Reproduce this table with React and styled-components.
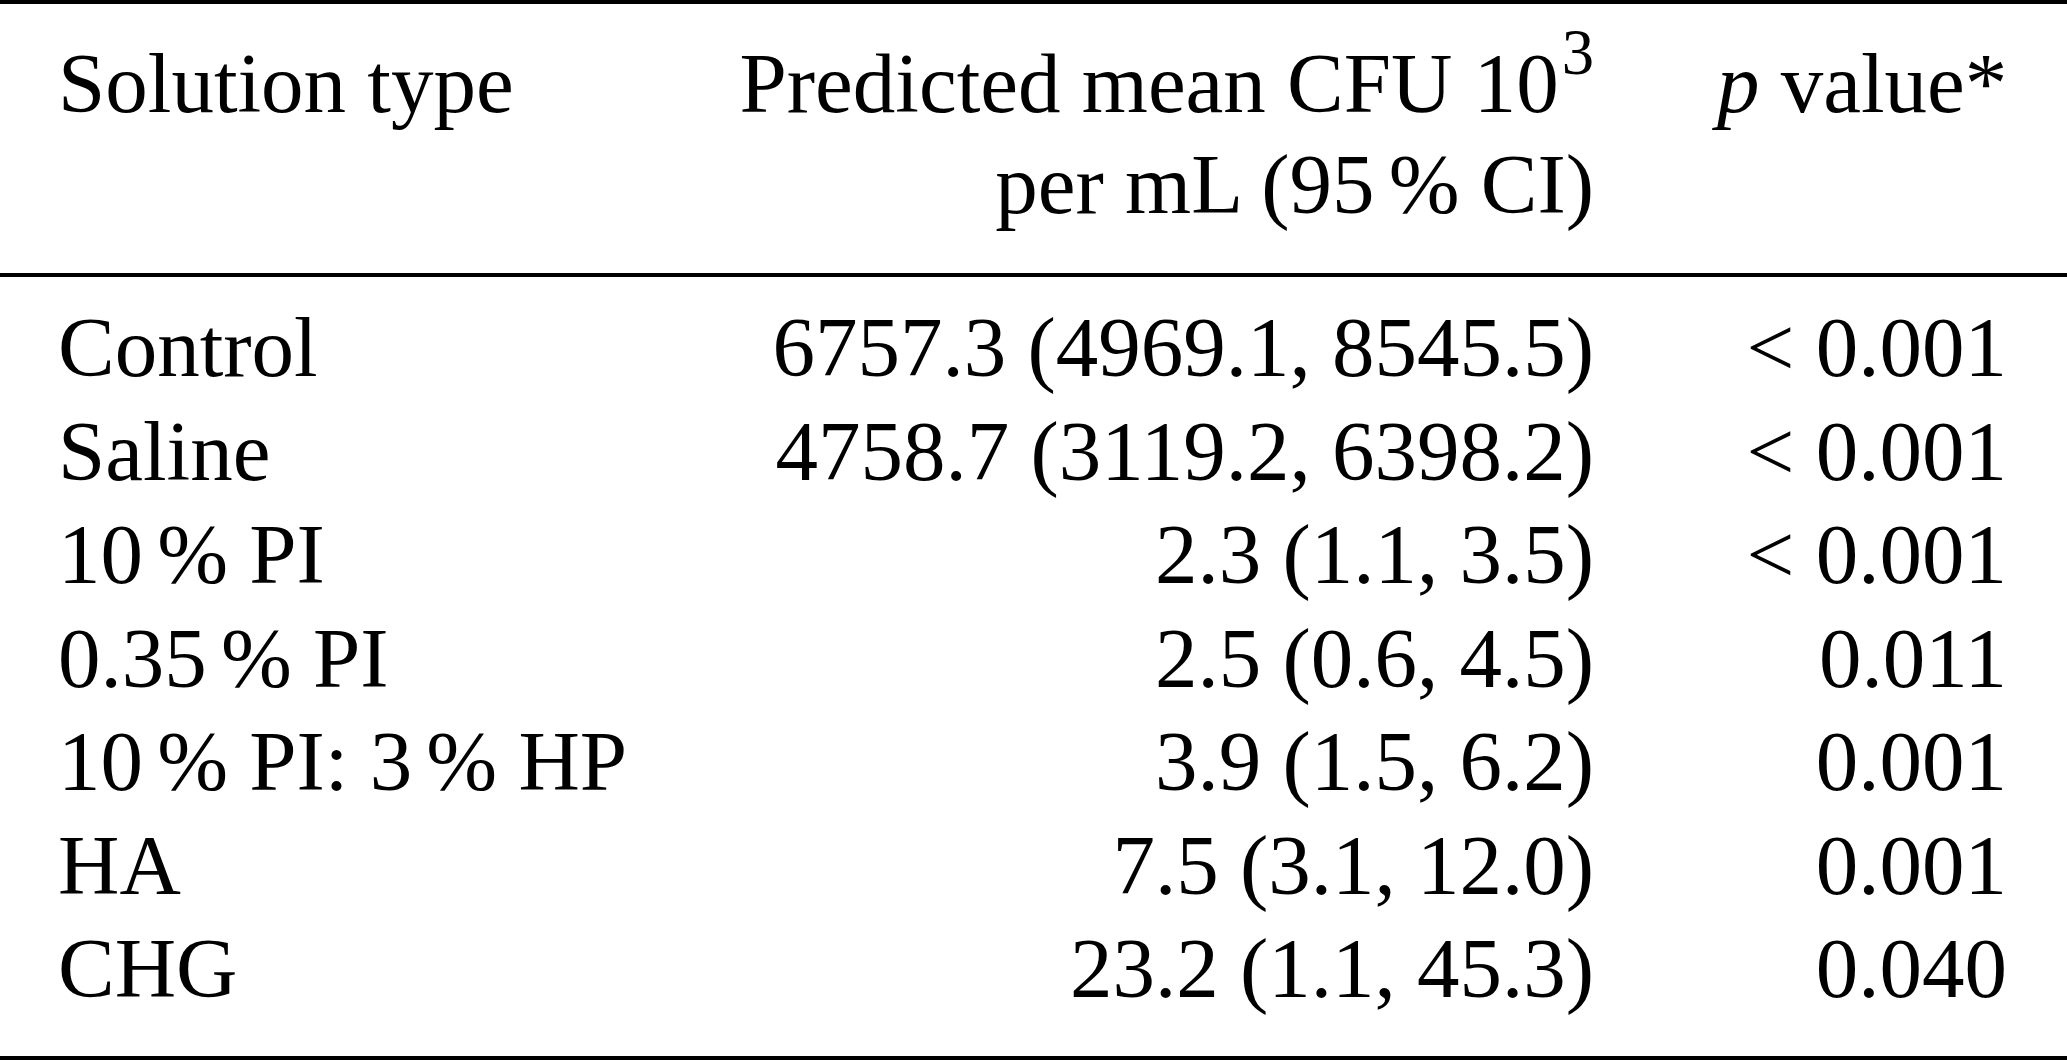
import React from "react";
import styled, { createGlobalStyle } from "styled-components";

const GlobalStyle = createGlobalStyle`
  html, body {
    margin: 0;
    padding: 0;
    background: #ffffff;
  }
  body {
    font-family: "Liberation Serif", "Times New Roman", Times, serif;
    color: #000;
  }
`;

const Table = styled.div`
  width: 100%;
  box-sizing: border-box;
  border-top: 4px solid #000;
  border-bottom: 4px solid #000;
  font-family: "Liberation Serif", "Times New Roman", Times, serif;
  font-size: 85px;
  color: #000;
`;

const Grid = styled.div`
  display: grid;
  grid-template-columns: 1fr auto 290px;
  column-gap: 123px;
  padding: 0 60px 0 58px;
`;

const Head = styled(Grid)`
  padding-top: 29px;
  padding-bottom: 38px;
  line-height: 101px;
  border-bottom: 4px solid #000;
`;

const Body = styled(Grid)`
  padding-top: 19px;
  padding-bottom: 35px;
  line-height: 103.5px;
`;

const Cell = styled.div`
  text-align: ${(p) => (p.$align === "right" ? "right" : "left")};
  white-space: nowrap;
`;

const Sup = styled.span`
  font-size: 0.76em;
  line-height: 0;
  vertical-align: 38px;
  margin-left: 3px;
`;

const Pct = styled.span`
  margin-left: 0.1667em;
`;

const Ital = styled.i`
  font-style: italic;
`;

const withPct = (text) => {
  const parts = text.split(" %");
  return parts.map((part, i) => (
    <React.Fragment key={i}>
      {part}
      {i < parts.length - 1 && <Pct>%</Pct>}
    </React.Fragment>
  ));
};

const rows = [
  ["Control", "6757.3 (4969.1, 8545.5)", "<\u00a00.001"],
  ["Saline", "4758.7 (3119.2, 6398.2)", "<\u00a00.001"],
  ["10 % PI", "2.3 (1.1, 3.5)", "<\u00a00.001"],
  ["0.35 % PI", "2.5 (0.6, 4.5)", "0.011"],
  ["10 % PI: 3 % HP", "3.9 (1.5, 6.2)", "0.001"],
  ["HA", "7.5 (3.1, 12.0)", "0.001"],
  ["CHG", "23.2 (1.1, 45.3)", "0.040"],
];

export default function App() {
  return (
    <>
      <GlobalStyle />
      <Table>
        <Head>
          <Cell>Solution type</Cell>
          <Cell $align="right">
            Predicted mean CFU 10<Sup>3</Sup>
            <br />
            per mL (95<Pct>%</Pct> CI)
          </Cell>
          <Cell $align="right">
            <Ital>p</Ital> value*
          </Cell>
        </Head>
        <Body>
          {rows.map(([name, mean, p]) => (
            <React.Fragment key={name}>
              <Cell>{withPct(name)}</Cell>
              <Cell $align="right">{mean}</Cell>
              <Cell $align="right">{p}</Cell>
            </React.Fragment>
          ))}
        </Body>
      </Table>
    </>
  );
}
